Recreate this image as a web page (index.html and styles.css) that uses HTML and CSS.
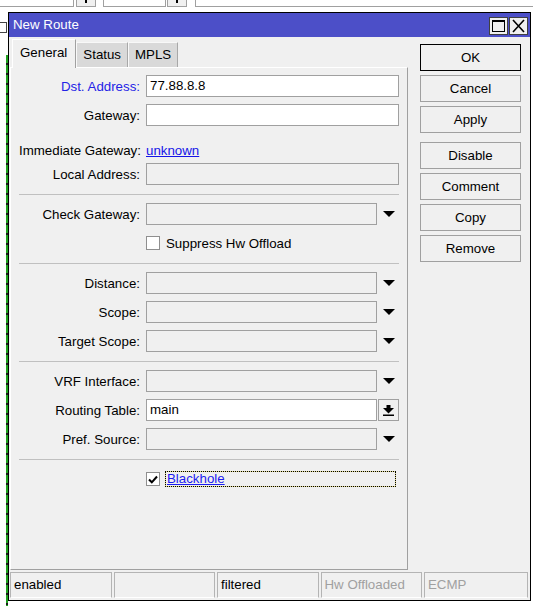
FILE: index.html
```html
<!DOCTYPE html>
<html>
<head>
<meta charset="utf-8">
<title>New Route</title>
<link rel="stylesheet" href="styles.css">
</head>
<body>
<div class="desktop">
  <div class="toolbar">
    <div class="tb-field f1">ess</div>
    <div class="tb-btn"><span class="tb-arrow"></span></div>
    <div class="tb-field f2">in</div>
    <div class="tb-btn b2"><span class="tb-arrow"></span></div>
    <div class="tb-field f3"></div>
  </div>
  <div class="list-head"><span class="hbox"></span></div>
  <div class="list">
    <div class="filler"></div>
    <div class="lrow"><span class="c1">203.104.128.0/20</span><span class="c2">192.168.104.1</span></div>
  </div>
</div>

<div class="window">
  <div class="titlebar">
    <span class="title">New Route</span>
    <div class="tbtns">
      <span class="tbtn"><svg width="15" height="14" viewBox="0 0 15 14"><rect x="1.5" y="1.5" width="12" height="11" fill="none" stroke="#000" stroke-width="1"/><rect x="1" y="1" width="13" height="2" fill="#000"/></svg></span>
      <span class="tbtn"><svg width="15" height="14" viewBox="0 0 15 14"><path d="M2 1L13 13M13 1L2 13" stroke="#000" stroke-width="1.6" fill="none"/></svg></span>
    </div>
  </div>
  <div class="wbody">
    <div class="left">
      <div class="tabs">
        <div class="tab active">General</div>
        <div class="tab">Status</div>
        <div class="tab">MPLS</div>
      </div>
      <div class="panel">
        <div class="row"><span class="lbl blue">Dst. Address:</span><div class="field">77.88.8.8</div></div>
        <div class="row"><span class="lbl">Gateway:</span><div class="field"></div></div>
        <div class="row r-imm"><span class="lbl">Immediate Gateway:</span><span class="link">unknown</span></div>
        <div class="row r-local"><span class="lbl">Local Address:</span><div class="field dis"></div></div>
        <div class="sep"></div>
        <div class="row"><span class="lbl">Check Gateway:</span><div class="field short dis"></div><span class="dd"><svg width="12" height="6" viewBox="0 0 12 6"><path d="M0 0H12L6 6Z" fill="#000"/></svg></span></div>
        <div class="row check"><span class="cb"></span><span class="cb-label">Suppress Hw Offload</span></div>
        <div class="sep"></div>
        <div class="row"><span class="lbl">Distance:</span><div class="field short dis"></div><span class="dd"><svg width="12" height="6" viewBox="0 0 12 6"><path d="M0 0H12L6 6Z" fill="#000"/></svg></span></div>
        <div class="row"><span class="lbl">Scope:</span><div class="field short dis"></div><span class="dd"><svg width="12" height="6" viewBox="0 0 12 6"><path d="M0 0H12L6 6Z" fill="#000"/></svg></span></div>
        <div class="row"><span class="lbl">Target Scope:</span><div class="field short dis"></div><span class="dd"><svg width="12" height="6" viewBox="0 0 12 6"><path d="M0 0H12L6 6Z" fill="#000"/></svg></span></div>
        <div class="sep"></div>
        <div class="row"><span class="lbl">VRF Interface:</span><div class="field short dis"></div><span class="dd"><svg width="12" height="6" viewBox="0 0 12 6"><path d="M0 0H12L6 6Z" fill="#000"/></svg></span></div>
        <div class="row"><span class="lbl">Routing Table:</span><div class="field short">main</div><span class="dropbtn"><svg width="11" height="11" viewBox="0 0 11 11"><rect x="3.5" y="0" width="4" height="3" fill="#000"/><path d="M0 3H11L5.5 8.5Z" fill="#000"/><rect x="0" y="9.5" width="11" height="1.5" fill="#000"/></svg></span></div>
        <div class="row"><span class="lbl">Pref. Source:</span><div class="field short dis"></div><span class="dd"><svg width="12" height="6" viewBox="0 0 12 6"><path d="M0 0H12L6 6Z" fill="#000"/></svg></span></div>
        <div class="sep"></div>
        <div class="row check"><span class="cb"><svg width="10" height="9" viewBox="0 0 10 9"><path d="M1 4.5L3.8 7.3L9 1.5" stroke="#000" stroke-width="2" fill="none"/></svg></span><span class="focus">Blackhole</span></div>
      </div>
    </div>
    <div class="buttons">
      <div class="btn default">OK</div>
      <div class="btn">Cancel</div>
      <div class="btn">Apply</div>
      <div class="btn gap">Disable</div>
      <div class="btn">Comment</div>
      <div class="btn">Copy</div>
      <div class="btn">Remove</div>
    </div>
  </div>
  <div class="statusbar">
    <div class="cell">enabled</div>
    <div class="cell"></div>
    <div class="cell">filtered</div>
    <div class="cell gray">Hw Offloaded</div>
    <div class="cell gray">ECMP</div>
  </div>
</div>
</body>
</html>
```

FILE: styles.css
```css
* { box-sizing: border-box; }

body {
  margin: 0;
  width: 533px;
  height: 606px;
  overflow: hidden;
  position: relative;
  background: #fff;
  font-family: "Liberation Sans", Arial, sans-serif;
  font-size: 13.3px;
  color: #000;
}

/* background application window */
.desktop {
  height: 606px;
  overflow: hidden;
}
.toolbar {
  display: flex;
  height: 22px;
  margin-top: -15px;
}
.tb-field {
  height: 22px;
  border: 1px solid #a0a0a0;
  background: #fff;
  padding-left: 4px;
  line-height: 20px;
  overflow: hidden;
  flex: none;
}
.f1 { margin-left: -3px; width: 77px; }
.f2 { margin-left: 7px; width: 63px; }
.f3 { margin-left: 8px; flex: 1; margin-right: -2px; }
.tb-btn {
  width: 20px;
  height: 22px;
  margin-left: 2px;
  border: 1px solid #a0a0a0;
  background: #f0f0f0;
  flex: none;
  display: flex;
  justify-content: center;
  align-items: flex-end;
  padding-bottom: 3px;
}
.tb-btn.b2 { margin-left: 1px; }
.tb-arrow {
  width: 2px;
  height: 3px;
  background: #000;
}
.list-head { height: 23px; }
.hbox {
  display: block;
  width: 9px;
  height: 11px;
  margin: 15px 0 0 -2px;
  border: 1px solid #444;
}
.list {
  padding-left: 8px;
  background: repeating-linear-gradient(to bottom, #1fa21f 0 8px, #1b1b1b 8px 10px) 6px 10px / 2px 100% no-repeat;
}
.filler { height: 567px; }
.lrow {
  height: 27px;
  display: flex;
  align-items: flex-start;
  padding-top: 1px;
  color: #000;
}
.c1 { margin-left: 12px; width: 207px; }
.c2 { border-left: 1px solid #d0d0d0; padding-left: 4px; }

/* dialog window */
.window {
  position: absolute;
  left: 8px;
  top: 12px;
  width: 523px;
  height: 589px;
  border: 1px solid #000;
  background: #f0f0f0;
  display: flex;
  flex-direction: column;
}
.titlebar {
  height: 24px;
  flex: none;
  background: #4c4fc8;
  color: #fff;
  display: flex;
  align-items: flex-start;
}
.title {
  padding-left: 4px;
  line-height: 24px;
}
.tbtns {
  margin-left: auto;
  margin-top: 4px;
  margin-right: 2px;
  display: flex;
  gap: 1px;
}
.tbtn {
  width: 19px;
  height: 18px;
  background: #f0f0f0;
  border: 1px solid #404040;
  display: flex;
  align-items: center;
  justify-content: center;
}

.wbody {
  height: 535px;
  flex: none;
  display: flex;
}
.left {
  margin-left: 1px;
  width: 398px;
  flex: none;
  display: flex;
  flex-direction: column;
}
.tabs {
  height: 30px;
  flex: none;
  display: flex;
  align-items: flex-end;
  padding-left: 2px;
  position: relative;
  z-index: 1;
}
.tab {
  height: 25px;
  padding: 0 6px;
  background: #d9d9d9;
  border: 1px solid #f8f8f8;
  border-right-color: #a8a8a8;
  border-bottom: none;
  line-height: 23px;
}
.tab.active {
  height: 29px;
  margin-bottom: -1px;
  padding: 0 8px 0 7px;
  background: #f0f0f0;
  border-color: #fff;
  border-right-color: #a0a0a0;
  line-height: 25px;
}
.panel {
  height: 503px;
  flex: none;
  border: 1px solid;
  border-color: #fff #a0a0a0 #a0a0a0 #fff;
  padding: 7px 8px 0;
}
.row {
  display: flex;
  align-items: center;
  height: 22px;
}
.row + .row { margin-top: 7px; }
.row.r-imm { margin-top: 13px; }
.row.r-local { margin-top: 2px; }
.lbl {
  width: 121px;
  margin-right: 6px;
  flex: none;
  text-align: right;
  white-space: nowrap;
}
.lbl.blue { color: #2323e6; }
.link {
  color: #1515e8;
  text-decoration: underline;
}
.field {
  width: 253px;
  height: 22px;
  flex: none;
  border: 1px solid #a0a0a0;
  background: #fff;
  padding-left: 3px;
  line-height: 20px;
}
.field.short { width: 231px; }
.field.dis { background: transparent; }
.dd {
  width: 22px;
  padding-left: 6px;
  display: flex;
  align-items: center;
}
.dropbtn {
  width: 21px;
  height: 22px;
  margin-left: 1px;
  border: 1px solid #a0a0a0;
  background: #f0f0f0;
  display: flex;
  align-items: center;
  justify-content: center;
}
.sep {
  height: 1px;
  background: #c0c0c0;
  margin: 9px 0 8px;
}
.row.check { padding-left: 127px; }
.cb {
  width: 14px;
  height: 14px;
  flex: none;
  border: 1px solid #8f8f8f;
  background: #fff;
  display: flex;
  align-items: center;
  justify-content: center;
}
.cb-label { margin-left: 6px; }
.focus {
  margin-left: 5px;
  width: 231px;
  height: 16px;
  border: 1px solid #e2da8c;
  outline: 1px dotted #000;
  outline-offset: -1px;
  padding-left: 1px;
  line-height: 14px;
  color: #1c1cf0;
  text-decoration: underline;
}

.buttons {
  margin-left: 12px;
  width: 101px;
  padding-top: 7px;
  display: flex;
  flex-direction: column;
  gap: 4px;
}
.btn {
  height: 27px;
  flex: none;
  border: 1px solid #a0a0a0;
  background: #f0f0f0;
  text-align: center;
  line-height: 25px;
}
.btn.default { border-color: #000; }
.btn.gap { margin-top: 5px; }

.statusbar {
  height: 26px;
  flex: none;
  margin: 0 2px 0 1px;
  display: grid;
  grid-template-columns: repeat(4, 101.5px) 1fr;
  column-gap: 2px;
}
.cell {
  border: 1px solid #b4b4b4;
  border-bottom-color: #fff;
  padding-left: 3px;
  line-height: 24px;
  white-space: nowrap;
  overflow: hidden;
}
.cell.gray { color: #a0a0a0; }
```
